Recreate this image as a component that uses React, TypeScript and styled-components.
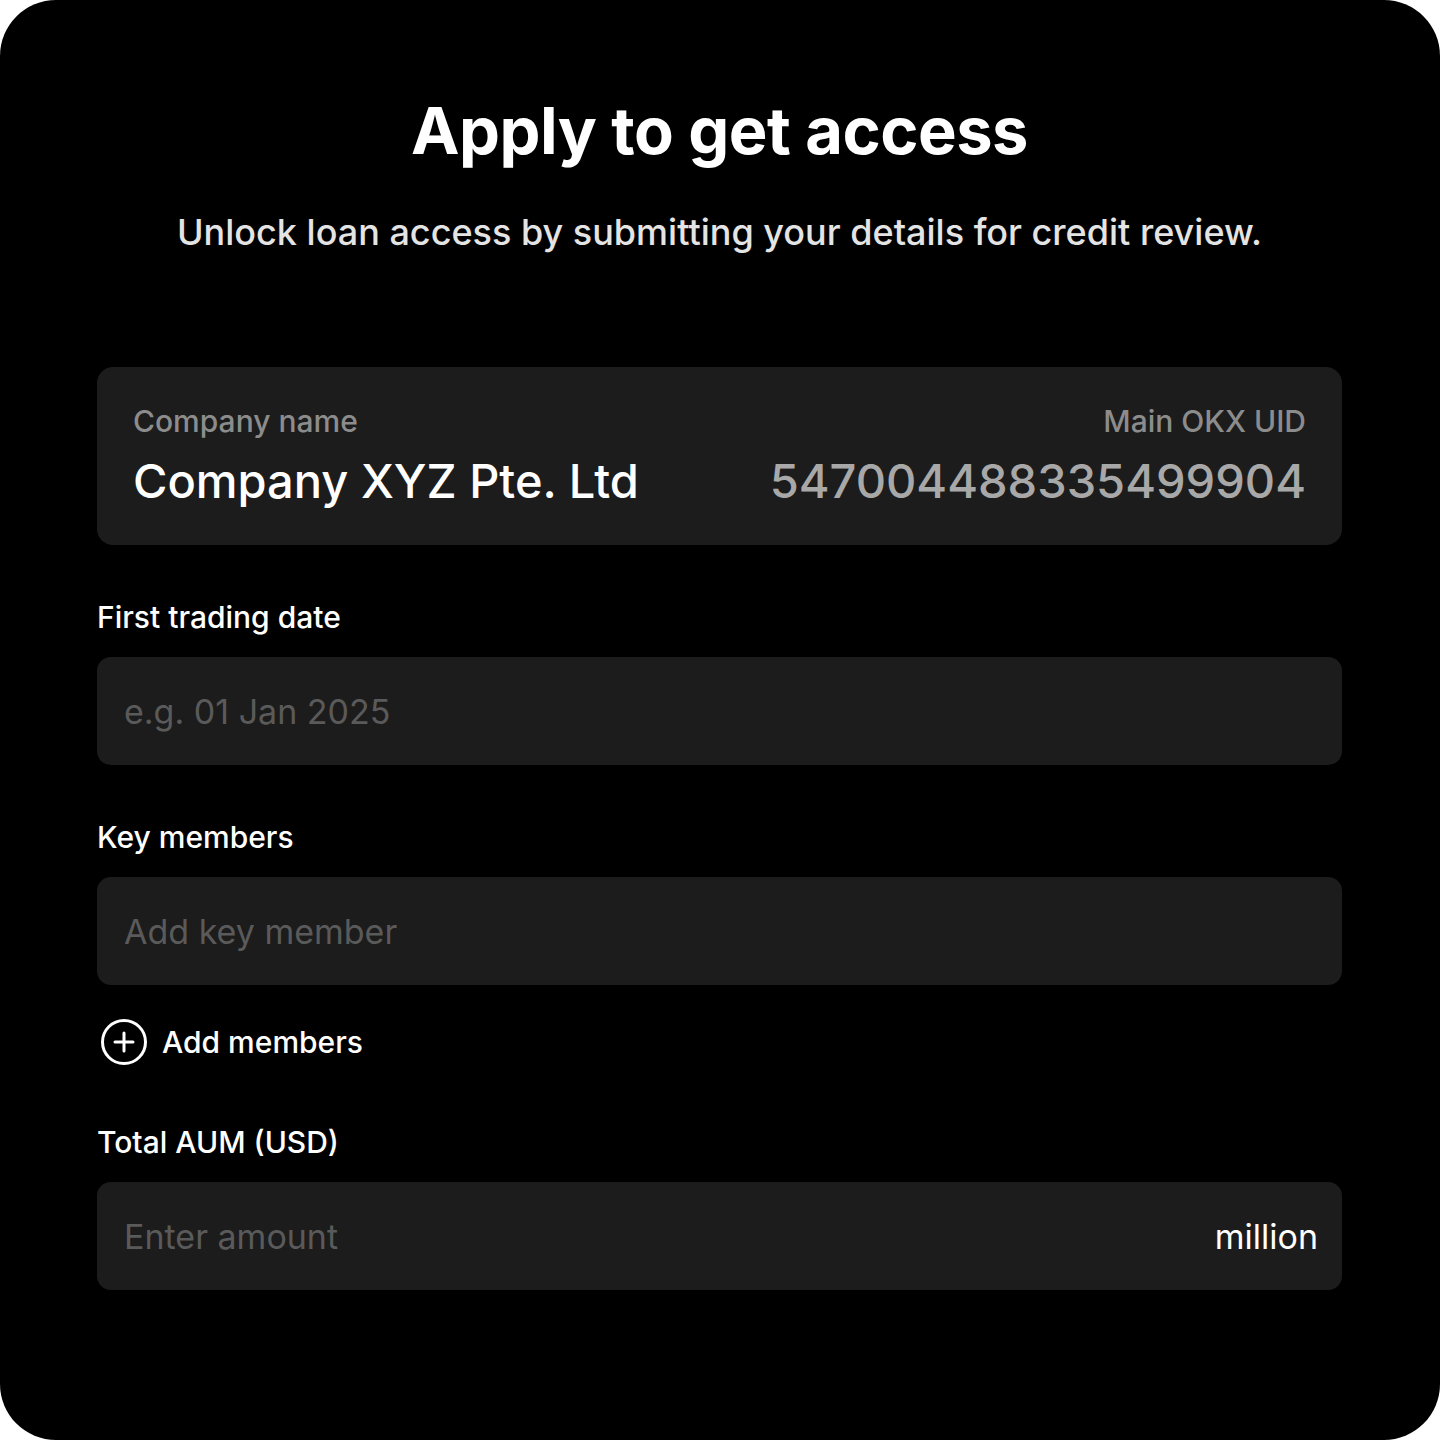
import React from 'react'
import styled, { createGlobalStyle } from 'styled-components'

const GlobalStyle = createGlobalStyle`
  html, body {
    margin: 0;
    padding: 0;
    background: #ffffff;
  }
  * {
    box-sizing: border-box;
  }
`

const App: React.FC = () => {
  return (
    <>
      <GlobalStyle />
      <StyledCard>
        <StyledTitle>Apply to get access</StyledTitle>
        <StyledSubtitle>Unlock loan access by submitting your details for credit review.</StyledSubtitle>

        <StyledInfoBox>
          <StyledInfoCol>
            <StyledInfoLabel>Company name</StyledInfoLabel>
            <StyledInfoValue>Company XYZ Pte. Ltd</StyledInfoValue>
          </StyledInfoCol>
          <StyledInfoCol $align="right">
            <StyledInfoLabel>Main OKX UID</StyledInfoLabel>
            <StyledInfoValue $muted>547004488335499904</StyledInfoValue>
          </StyledInfoCol>
        </StyledInfoBox>

        <StyledField>
          <StyledLabel>First trading date</StyledLabel>
          <StyledInputBox>
            <StyledInput placeholder="e.g. 01 Jan 2025" />
          </StyledInputBox>
        </StyledField>

        <StyledField>
          <StyledLabel>Key members</StyledLabel>
          <StyledInputBox>
            <StyledInput placeholder="Add key member" />
          </StyledInputBox>
        </StyledField>

        <StyledAddButton type="button">
          <svg width="48" height="48" viewBox="0 0 48 48" fill="none">
            <circle cx="24" cy="24" r="21.5" stroke="#fff" strokeWidth="3" />
            <path d="M24 15v18M15 24h18" stroke="#fff" strokeWidth="3" strokeLinecap="round" />
          </svg>
          Add members
        </StyledAddButton>

        <StyledField>
          <StyledLabel>Total AUM (USD)</StyledLabel>
          <StyledInputBox>
            <StyledInput placeholder="Enter amount" />
            <StyledSuffix>million</StyledSuffix>
          </StyledInputBox>
        </StyledField>
      </StyledCard>
    </>
  )
}

export default App

const StyledCard = styled.div`
  width: 1440px;
  height: 1440px;
  background: #000;
  border-radius: 56px;
  padding: 92px 98px 0 97px;
  display: flex;
  flex-direction: column;
  font-family: Inter, 'Liberation Sans', sans-serif;
  color: #fff;
  overflow: hidden;
`

const StyledTitle = styled.h1`
  margin: 0;
  text-align: center;
  font-size: 65px;
  line-height: 78px;
  font-weight: 700;
  letter-spacing: -0.5px;
`

const StyledSubtitle = styled.p`
  margin: 40px 0 0;
  text-align: center;
  font-size: 36px;
  line-height: 44px;
  font-weight: 500;
  color: #e4e4e4;
`

const StyledInfoBox = styled.div`
  margin-top: 113px;
  height: 178px;
  background: #1c1c1c;
  border-radius: 16px;
  padding: 0 36px;
  display: flex;
  justify-content: space-between;
  align-items: center;
`

const StyledInfoCol = styled.div<{ $align?: 'left' | 'right' }>`
  display: flex;
  flex-direction: column;
  gap: 14px;
  align-items: ${(p) => (p.$align === 'right' ? 'flex-end' : 'flex-start')};
`

const StyledInfoLabel = styled.span`
  font-size: 30px;
  line-height: 36px;
  font-weight: 500;
  color: #8c8c8c;
`

const StyledInfoValue = styled.span<{ $muted?: boolean }>`
  font-size: 47px;
  line-height: 56px;
  font-weight: 500;
  color: ${(p) => (p.$muted ? '#a8a8a8' : '#ffffff')};
`

const StyledField = styled.div`
  margin-top: 54px;
  display: flex;
  flex-direction: column;
  gap: 22px;
`

const StyledLabel = styled.label`
  font-size: 30px;
  line-height: 36px;
  font-weight: 500;
  color: #fff;
`

const StyledInputBox = styled.div`
  height: 108px;
  background: #1c1c1c;
  border-radius: 14px;
  padding: 0 24px 0 25px;
  display: flex;
  align-items: center;
`

const StyledInput = styled.input`
  flex: 1;
  min-width: 0;
  background: transparent;
  border: none;
  outline: none;
  font-family: inherit;
  font-size: 34px;
  color: #fff;
  &::placeholder {
    color: #5a5a5a;
  }
`

const StyledSuffix = styled.span`
  font-size: 34px;
  color: #fff;
`

const StyledAddButton = styled.button`
  margin-top: 33px;
  align-self: flex-start;
  display: flex;
  align-items: center;
  gap: 14px;
  padding: 0 0 0 3px;
  background: none;
  border: none;
  color: #fff;
  font-family: inherit;
  font-size: 30px;
  font-weight: 500;
  cursor: pointer;
  & + ${StyledField} {
    margin-top: 58px;
  }
`
